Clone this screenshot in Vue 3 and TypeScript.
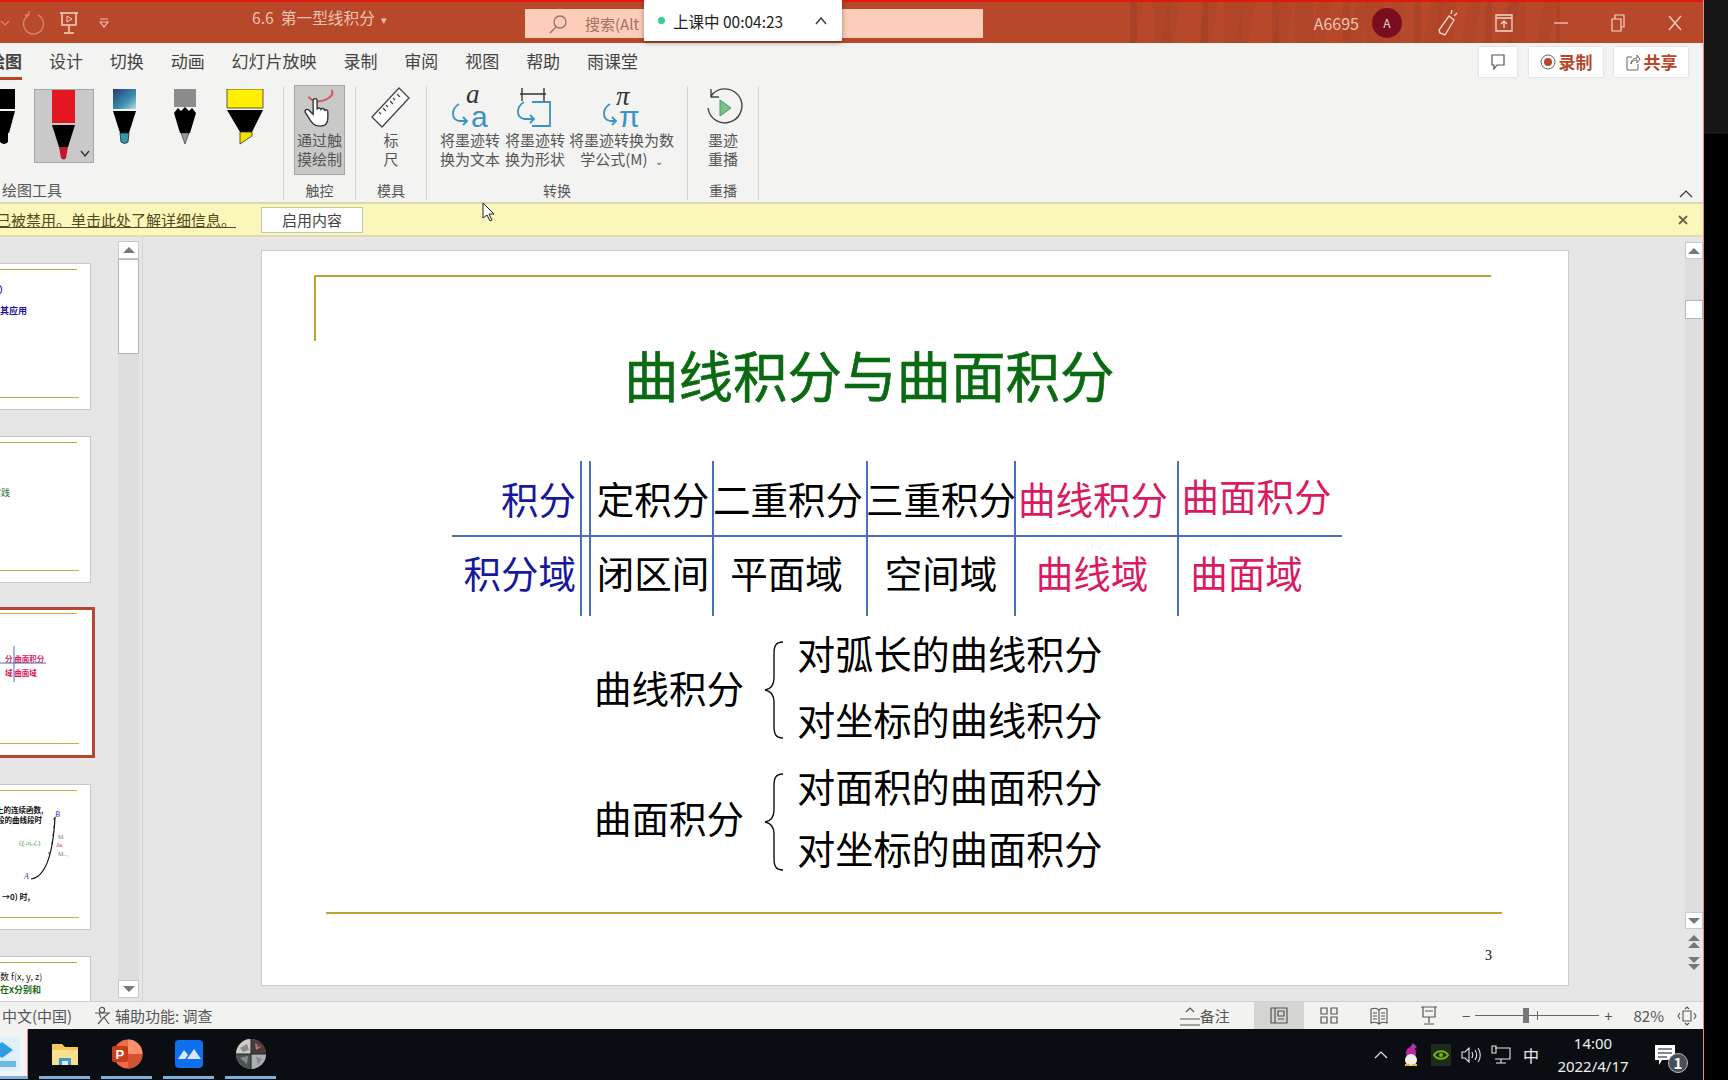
<script setup lang="ts">
interface ThumbRow {
  text: string
  color: string
  top: number
  left: number
  bold?: boolean
  size?: number
}

interface Thumb {
  selected?: boolean
  rows: ThumbRow[]
  curve?: boolean
  height: number
}

const tabs = ['设计', '切换', '动画', '幻灯片放映', '录制', '审阅', '视图', '帮助', '雨课堂']

const thumbs: Thumb[] = [
  {
    height: 147,
    rows: [
      { text: '分）', color: '#1a1a9c', top: 14, left: -10, bold: true },
      { text: '其应用', color: '#1a1a9c', top: 10, left: 0, bold: true },
    ],
  },
  {
    height: 147,
    rows: [{ text: '实践', color: '#1b6b1b', top: 44, left: -8 }],
  },
  {
    height: 151,
    selected: true,
    rows: [
      { text: '分 曲面积分', color: '#d81b60', top: 39, left: 5, bold: true, size: 7.5 },
      { text: '域 曲面域', color: '#d81b60', top: 3, left: 5, bold: true, size: 7.5 },
    ],
  },
  {
    height: 146,
    curve: true,
    rows: [
      { text: '上的连续函数,', color: '#111', top: 13, left: -4, bold: true, size: 7.5 },
      { text: '段的曲线段时', color: '#111', top: -1, left: -3, bold: true, size: 7.5 },
      { text: '→0) 时,', color: '#111', top: 66, left: 2, bold: true, size: 8 },
    ],
  },
  {
    height: 60,
    rows: [
      { text: '数 f(x, y, z)', color: '#222', top: 8, left: 0 },
      { text: '在x分别和', color: '#1b6b1b', top: 2, left: 0, bold: true },
    ],
  },
]

const headRow = [
  { text: '积分', tone: 'blue first' },
  { text: '定积分', tone: 'push' },
  { text: '二重积分', tone: 'pull-s' },
  { text: '三重积分', tone: '' },
  { text: '曲线积分', tone: 'pink pull-m' },
  { text: '曲面积分', tone: 'pink raised' },
]

const bodyRow = [
  { text: '积分域', tone: 'blue first' },
  { text: '闭区间', tone: 'push' },
  { text: '平面域', tone: 'pull-m' },
  { text: '空间域', tone: '' },
  { text: '曲线域', tone: 'pink pull-l' },
  { text: '曲面域', tone: 'pink last' },
]

const taskItems = ['app', 'folder', 'ppt', 'meet', 'photo']
</script>

<template>
  <div class="screen">
    <div class="app">
      <header class="titlebar">
        <div class="quick">
          <svg class="q-undo" width="10" height="8" viewBox="0 0 10 8"><path d="M1 2l4 4 4-4" fill="none" stroke="#d98b72" stroke-width="1.2" /></svg>
          <svg class="q-redo" width="24" height="26" viewBox="0 0 24 26"><path d="M8 5a10 10 0 1 0 9 0M8 5V1M8 5H4" fill="none" stroke="#d9826a" stroke-width="1.4" /></svg>
          <svg class="q-show" width="20" height="24" viewBox="0 0 20 24"><path d="M1 2h18M3 2v12h14V2M10 14v7M5 22h10" fill="none" stroke="#f3d3c6" stroke-width="1.5" /><path d="M8 5l5 3-5 3z" fill="none" stroke="#f3d3c6" /></svg>
          <svg class="q-more" width="10" height="12" viewBox="0 0 10 12"><path d="M1 2h8M1 5l4 5 4-5z" fill="none" stroke="#f0c4b2" stroke-width="1.1" /></svg>
        </div>
        <div class="doc-title">6.6&nbsp; 第一型线积分 <span class="caret">▾</span></div>
        <div class="search">
          <svg width="20" height="20" viewBox="0 0 20 20"><circle cx="12" cy="8" r="6" fill="none" stroke="#a96b58" stroke-width="1.3" /><path d="M8 13l-6 6" stroke="#a96b58" stroke-width="1.3" /></svg>
          <span>搜索(Alt</span>
        </div>
        <div class="title-right">
          <span class="user">A6695</span>
          <span class="avatar">A</span>
          <span class="win-btn"><svg width="22" height="30" viewBox="0 0 22 30"><path d="M13 8l5 4-9 15-5-2-1-3zM16 2l-1 4M21 5l-3 3" fill="none" stroke="#f3d8cc" stroke-width="1.4" /></svg></span>
          <span class="win-btn"><svg width="18" height="18" viewBox="0 0 18 18"><path d="M1 1h16v16H1zM1 4h16M9 14V7M6 10l3-3 3 3" fill="none" stroke="#f3d8cc" stroke-width="1.3" /></svg></span>
          <span class="win-btn"><svg width="14" height="2" viewBox="0 0 14 2"><path d="M0 1h14" stroke="#f3d8cc" stroke-width="1.2" /></svg></span>
          <span class="win-btn"><svg width="14" height="18" viewBox="0 0 14 18"><path d="M1 5h9v12H1zM4 5V1h9v12h-3" fill="none" stroke="#f3d8cc" stroke-width="1.2" /></svg></span>
          <span class="win-btn"><svg width="14" height="16" viewBox="0 0 14 16"><path d="M1 1l12 14M13 1L1 15" stroke="#f3d8cc" stroke-width="1.2" /></svg></span>
        </div>
        <div class="class-pop">
          <i class="live-dot"></i>
          <span>上课中 00:04:23</span>
          <svg width="12" height="8" viewBox="0 0 12 8"><path d="M1 7l5-6 5 6" fill="none" stroke="#444" stroke-width="1.6" /></svg>
        </div>
      </header>

      <nav class="tabs">
        <span class="tab active">绘图</span>
        <span v-for="t in tabs" :key="t" class="tab">{{ t }}</span>
        <div class="tab-actions">
          <span class="act small">
            <svg width="16" height="18" viewBox="0 0 16 18"><path d="M2 2h12v10H7l-3 4v-4H2z" fill="none" stroke="#555" stroke-width="1.2" /></svg>
          </span>
          <span class="act rec">
            <svg width="16" height="16" viewBox="0 0 16 16"><circle cx="8" cy="8" r="7" fill="none" stroke="#666" /><circle cx="8" cy="8" r="4" fill="#b7472a" /></svg>
            录制
          </span>
          <span class="act rec">
            <svg width="16" height="18" viewBox="0 0 16 18"><path d="M7 4H2v13h11v-6M6 11c0-4 3-6 6-6V2l3 4-3 4V7c-3 0-5 1-6 4z" fill="none" stroke="#666" /></svg>
            共享
          </span>
        </div>
      </nav>

      <section class="ribbon">
        <div class="group pens">
          <div class="group-body pen-row">
            <svg class="pen" viewBox="0 0 60 74">
              <path d="M19 0h22v20H19z" fill="#000" />
              <path d="M19 22h22l-6 22H25z" fill="#000" />
              <path d="M26 44h8v9q-4 4-8 0z" fill="#000" />
            </svg>
            <div class="pen-selected">
              <svg class="pen" viewBox="0 0 60 74">
                <path d="M18 0h23v34H18z" fill="#e31621" />
                <path d="M18 36h23l-7 22h-9z" fill="#000" />
                <path d="M25 58h9l-2 11q-2 3-5 0z" fill="#c3172a" />
                <path d="M47 62l4 5 4-5" fill="none" stroke="#333" stroke-width="1.4" />
              </svg>
            </div>
            <svg class="pen" viewBox="0 0 60 74">
              <defs><linearGradient id="gal" x1="0" y1="0" x2="1" y2="1"><stop offset="0" stop-color="#263a78" /><stop offset=".6" stop-color="#3a8fb0" /><stop offset="1" stop-color="#b8dbe0" /></linearGradient></defs>
              <path d="M19 0h23v20H19z" fill="url(#gal)" />
              <path d="M19 22h23l-7 22h-9z" fill="#000" />
              <path d="M26 44h9l-1 9q-3 3-7 0z" fill="#2f9aa8" stroke="#123" stroke-width=".8" />
            </svg>
            <svg class="pen" viewBox="0 0 60 74">
              <path d="M20 0h22v18H20z" fill="#8c8c8c" />
              <path d="M20 24l4-5 3 3 4-4 4 4 3-3 4 5-6 20h-10z" fill="#000" />
              <path d="M27 44h8l-4 11z" fill="#999" stroke="#222" stroke-width=".6" />
            </svg>
            <svg class="pen" viewBox="0 0 60 74">
              <path d="M13 0h36v19H13z" fill="#ffef00" stroke="#333" stroke-width=".8" />
              <path d="M13 21h36l-11 22H26z" fill="#000" />
              <path d="M26 43h12v4l-12 8z" fill="#f3e000" stroke="#333" stroke-width=".8" />
            </svg>
          </div>
          <div class="group-label left">绘图工具</div>
        </div>

        <div class="group touch">
          <div class="group-body">
            <div class="big-btn on">
              <svg width="40" height="46" viewBox="0 0 40 46">
                <path d="M8 12c4 5 12 6 18 3s8-6 6-10" fill="none" stroke="#d9575e" stroke-width="2" />
                <path d="M13 15c2-2 4-1 4 1v9c1-2 3-2 4 0 1-2 3-1 4 1 1-1 3-1 3 1v7c0 6-3 8-8 8-6 0-8-3-10-6l-5-8c-1-3 2-4 4-2l4 4z" fill="#fff" stroke="#333" stroke-width="1.4" />
              </svg>
              <span>通过触<br />摸绘制</span>
            </div>
          </div>
          <div class="group-label">触控</div>
        </div>

        <div class="group ruler">
          <div class="group-body">
            <div class="big-btn">
              <svg width="40" height="44" viewBox="0 0 40 44">
                <path d="M28 2l10 10L11 41 1 31z" fill="#fff" stroke="#444" stroke-width="1.3" />
                <path d="M26 8l3 3M22 12l2 2M19 15l3 3M15 19l2 2M12 22l3 3M8 26l2 2" stroke="#444" stroke-width="1.2" />
              </svg>
              <span>标<br />尺</span>
            </div>
          </div>
          <div class="group-label">模具</div>
        </div>

        <div class="group convert">
          <div class="group-body conv-row">
            <div class="big-btn conv w1">
              <svg width="42" height="44" viewBox="0 0 42 44">
                <text x="17" y="17" class="ico-serif" font-size="27" fill="#333">a</text>
                <path d="M10 18c-8 5-8 15 0 17h8M14 31l4 4-4 4" fill="none" stroke="#3b93c4" stroke-width="1.8" />
                <text x="22" y="41" class="ico-sans" font-size="30" fill="#3b93c4">a</text>
              </svg>
              <span>将墨迹转<br />换为文本</span>
            </div>
            <div class="big-btn conv w2">
              <svg width="42" height="44" viewBox="0 0 42 44">
                <path d="M6 8h26M8 2v13M30 2v13" fill="none" stroke="#333" stroke-width="1.4" />
                <path d="M18 16h18v24H18" fill="none" stroke="#3b93c4" stroke-width="1.8" />
                <path d="M10 16c-8 5-8 15 0 17h10M16 29l4 4-4 4" fill="none" stroke="#3b93c4" stroke-width="1.8" />
              </svg>
              <span>将墨迹转<br />换为形状</span>
            </div>
            <div class="big-btn conv w3">
              <svg width="42" height="44" viewBox="0 0 42 44">
                <text x="15" y="19" class="ico-serif" font-size="27" fill="#333">π</text>
                <path d="M9 18c-8 5-8 15 0 17h6M11 31l4 4-4 4" fill="none" stroke="#3b93c4" stroke-width="1.8" />
                <text x="18" y="41" class="ico-sans" font-size="30" fill="#3b93c4">π</text>
              </svg>
              <span>将墨迹转换为数<br />学公式(M) <small>⌄</small></span>
            </div>
          </div>
          <div class="group-label">转换</div>
        </div>

        <div class="group replay">
          <div class="group-body">
            <div class="big-btn">
              <svg width="40" height="44" viewBox="0 0 40 44">
                <path d="M8 10a17 17 0 1 1-3 12M8 3v8h8" fill="none" stroke="#444" stroke-width="1.4" />
                <path d="M17 14l11 8-11 8z" fill="#7cc08a" stroke="#3f9c64" />
              </svg>
              <span>墨迹<br />重播</span>
            </div>
          </div>
          <div class="group-label">重播</div>
        </div>

        <svg class="collapse" width="14" height="9" viewBox="0 0 14 9"><path d="M1 8l6-6 6 6" fill="none" stroke="#333" stroke-width="1.2" /></svg>
      </section>

      <div class="msgbar">
        <div class="msg-clip"><span>已被禁用。单击此处了解详细信息。</span></div>
        <button class="enable">启用内容</button>
        <svg class="msg-close" width="10" height="10" viewBox="0 0 10 10"><path d="M1 1l8 8M9 1l-8 8" stroke="#6b6640" stroke-width="1.8" /></svg>
        <svg class="cursor" width="14" height="20" viewBox="0 0 14 20"><path d="M1 1v15l4-3 3 6 2-1-3-6h5z" fill="#fff" stroke="#222" /></svg>
      </div>

      <main class="workspace">
        <aside class="thumb-pane">
          <div class="thumb-list">
            <div
              v-for="(t, i) in thumbs"
              :key="i"
              class="thumb"
              :class="{ selected: t.selected }"
              :style="{ height: t.height + 'px' }"
            >
              <i class="thumb-line"></i>
              <p
                v-for="r in t.rows"
                :key="r.text"
                class="thumb-text"
                :class="{ bold: r.bold }"
                :style="{ color: r.color, marginTop: r.top + 'px', marginLeft: r.left + 'px', fontSize: (r.size ?? 9) + 'px' }"
              >{{ r.text }}</p>
              <svg v-if="t.selected" class="thumb-grid" width="95" height="40" viewBox="0 0 95 40">
                <path d="M0 17h46M14 0v36" fill="none" stroke="#4a6fbd" stroke-width="1" />
              </svg>
              <svg v-if="t.curve" class="thumb-curve" width="50" height="72" viewBox="0 0 50 72">
                <path d="M6 68c14-2 22-24 24-62" fill="none" stroke="#111" stroke-width="1.2" />
                <path d="M30 8h-2M30 16h-2M29 24h-2M28 32h-2M25 42h-2" stroke="#111" stroke-width=".8" />
                <text x="30" y="6" font-size="8" fill="#3a2fb0" font-style="italic">B</text>
                <text x="-1" y="68" font-size="8" fill="#3a2fb0" font-style="italic">A</text>
                <text x="31" y="36" font-size="6" fill="#c2185b">Δsᵢ</text>
                <text x="33" y="28" font-size="6" fill="#777">Mᵢ</text>
                <text x="33" y="45" font-size="6" fill="#777">Mᵢ₋₁</text>
                <text x="-6" y="34" font-size="7" fill="#2e9a3e">(ξᵢ,ηᵢ,ζᵢ)</text>
              </svg>
              <i class="thumb-line bottom"></i>
            </div>
          </div>
          <div class="scroll left-scroll">
            <span class="sb-btn"><i class="arr up"></i></span>
            <span class="sb-thumb"></span>
            <span class="sb-track"></span>
            <span class="sb-btn"><i class="arr down"></i></span>
          </div>
        </aside>

        <div class="stage">
          <article class="slide">
            <div class="corner"></div>
            <h1 class="slide-title">曲线积分与曲面积分</h1>
            <div class="int-table">
              <div v-for="c in headRow" :key="c.text" class="cell head" :class="c.tone"><span>{{ c.text }}</span></div>
              <div v-for="c in bodyRow" :key="c.text" class="cell low" :class="c.tone"><span>{{ c.text }}</span></div>
            </div>
            <div class="branch">
              <span class="branch-name">曲线积分</span>
              <svg class="brace" width="22" height="98" viewBox="0 0 22 98"><path d="M20 1c-8 0-9 5-9 12v24c0 7-3 11-9 12 6 1 9 5 9 12v24c0 7 1 12 9 12" fill="none" stroke="#111" stroke-width="1.4" /></svg>
              <div class="branch-list one"><span>对弧长的曲线积分</span><span>对坐标的曲线积分</span></div>
            </div>
            <div class="branch second">
              <span class="branch-name">曲面积分</span>
              <svg class="brace" width="22" height="98" viewBox="0 0 22 98"><path d="M20 1c-8 0-9 5-9 12v24c0 7-3 11-9 12 6 1 9 5 9 12v24c0 7 1 12 9 12" fill="none" stroke="#111" stroke-width="1.4" /></svg>
              <div class="branch-list two"><span>对面积的曲面积分</span><span>对坐标的曲面积分</span></div>
            </div>
            <div class="foot-rule"></div>
            <div class="page-no">3</div>
          </article>
          <div class="scroll main-scroll">
            <span class="sb-btn"><i class="arr up"></i></span>
            <span class="sb-gap"></span>
            <span class="sb-thumb small"></span>
            <span class="sb-track"></span>
            <span class="sb-btn"><i class="arr down"></i></span>
            <span class="page-jump first"><i class="arr up"></i><i class="arr up tight"></i></span>
            <span class="page-jump"><i class="arr down"></i><i class="arr down tight"></i></span>
          </div>
        </div>
      </main>

      <footer class="statusbar">
        <span class="lang">中文(中国)</span>
        <span class="a11y">
          <svg width="18" height="20" viewBox="0 0 18 20"><circle cx="8" cy="4" r="2.6" fill="none" stroke="#555" stroke-width="1.2" /><path d="M1 7h14l-5 4 5 7M10 11l-6 7M5 7l2 5" fill="none" stroke="#555" stroke-width="1.2" /></svg>
          辅助功能: 调查
        </span>
        <div class="status-right">
          <span class="notes">
            <svg width="20" height="20" viewBox="0 0 20 20"><path d="M0 13h20M0 19h20M6 6l4-4 4 4" fill="none" stroke="#555" stroke-width="1.2" /></svg>
            备注
          </span>
          <span class="view-btn on"><svg width="18" height="17" viewBox="0 0 18 17"><path d="M1 1h16v15H1zM5 1v15M8 4h6v5H8zM8 12h6" fill="none" stroke="#555" stroke-width="1.2" /></svg></span>
          <span class="view-btn"><svg width="18" height="17" viewBox="0 0 18 17"><path d="M1 1h6v6H1zM11 1h6v6h-6zM1 10h6v6H1zM11 10h6v6h-6z" fill="none" stroke="#555" stroke-width="1.2" /></svg></span>
          <span class="view-btn"><svg width="18" height="18" viewBox="0 0 18 18"><path d="M9 3C7 1 4 1 1 2v14c3-1 6-1 8 1 2-2 5-2 8-1V2c-3-1-6-1-8 1zM9 3v14M3 6h4M3 9h4M3 12h4M11 6h4M11 9h4M11 12h4" fill="none" stroke="#555" stroke-width="1.1" /></svg></span>
          <span class="view-btn"><svg width="18" height="19" viewBox="0 0 18 19"><path d="M1 1h16M3 1v10h12V1M9 11v6M4 18h10M5 5h8" fill="none" stroke="#555" stroke-width="1.2" /></svg></span>
          <span class="zoom-sign first">−</span>
          <div class="slider"><i class="slider-mid"></i><i class="slider-knob"></i></div>
          <span class="zoom-sign">+</span>
          <span class="zoom-val">82%</span>
          <svg class="fit" width="20" height="20" viewBox="0 0 20 20"><path d="M6 5h8v10H6zM3 7l-2 3 2 3M17 7l2 3-2 3M8 3l2-2 2 2M8 17l2 2 2-2" fill="none" stroke="#555" stroke-width="1.1" /></svg>
        </div>
      </footer>

      <div class="taskbar">
        <div class="task-apps">
          <div v-for="k in taskItems" :key="k" class="task-item" :class="k">
            <svg v-if="k === 'app'" width="36" height="34" viewBox="0 0 36 34">
              <rect x="0" y="0" width="36" height="34" rx="5" fill="#dff0fb" />
              <path d="M18 5l11 8-11 8-11-8z" fill="#2f9de0" />
              <rect x="4" y="24" width="28" height="6" fill="#67b9e8" />
            </svg>
            <svg v-else-if="k === 'folder'" width="28" height="24" viewBox="0 0 28 24">
              <path d="M1 2h10l3 3h13v18H1z" fill="#f3c95a" />
              <path d="M1 8h26v15H1z" fill="#fadf8c" />
              <path d="M8 16h12v7H8z" fill="#3d9ad1" />
              <path d="M11 19h6v4h-6z" fill="#dff0fb" />
            </svg>
            <svg v-else-if="k === 'ppt'" width="32" height="30" viewBox="0 0 32 30">
              <circle cx="17" cy="15" r="14.5" fill="#ed6c47" />
              <path d="M17 15V.5a14.5 14.5 0 0 1 14.5 14.5z" fill="#ff8f6b" />
              <path d="M17 15h14.5A14.500 14.500 0 0 1 17 29.500z" fill="#d35230" />
              <rect x="1" y="7" width="16" height="16" rx="2" fill="#c43e1c" />
              <text x="4.500" y="20" font-size="13" font-weight="700" fill="#fff" class="ico-sans">P</text>
            </svg>
            <svg v-else-if="k === 'meet'" width="28" height="28" viewBox="0 0 28 28">
              <rect width="28" height="28" rx="4" fill="#0f6fec" />
              <path d="M3 19l6-9 4 5-3 4zM12 19l7-10 7 10z" fill="#d8e8fb" />
            </svg>
            <svg v-else width="30" height="30" viewBox="0 0 30 30">
              <circle cx="15" cy="15" r="15" fill="#8d8d8d" />
              <path d="M15 0a15 15 0 0 0-15 15h15z" fill="#cfccc6" />
              <path d="M15 0a15 15 0 0 1 15 15H15z" fill="#4a3a3a" />
              <path d="M15 15H0a15 15 0 0 0 15 15z" fill="#4c5356" />
              <path d="M15 15h15a15 15 0 0 1-15 15z" fill="#a9b0b4" />
              <path d="M4 9l7-4 2 6-6 2zM19 4l6 4-5 3zM4 19l8-2-1 8zM20 18l6 2-4 6z" fill="#8a8a8a" />
              <path d="M21 6h4v2h-4z" fill="#b52d2d" />
              <path d="M14.500 0h1v30h-1zM0 14.500h30v1H0z" fill="#222" />
            </svg>
          </div>
        </div>
        <div class="tray">
          <span class="tray-slot"><svg width="14" height="9" viewBox="0 0 14 9"><path d="M1 8l6-6 6 6" fill="none" stroke="#e6e6e6" stroke-width="1.2" /></svg></span>
          <span class="tray-slot"><svg width="16" height="24" viewBox="0 0 16 24"><path d="M10 0l4 4-4 3-3-3z" fill="#a33aa8" /><ellipse cx="8" cy="10" rx="5" ry="6" fill="#c026a8" /><ellipse cx="8" cy="17" rx="6" ry="6" fill="#f1eee6" /><path d="M2 22h5M9 22h5" stroke="#f2b632" stroke-width="2" /></svg></span>
          <span class="tray-slot"><svg width="20" height="22" viewBox="0 0 20 22"><rect width="20" height="22" fill="#1e2b1c" /><path d="M3 11c3-5 11-5 14 0-3 5-11 5-14 0z" fill="none" stroke="#76b900" stroke-width="2" /><circle cx="10" cy="11" r="2" fill="#76b900" /></svg></span>
          <span class="tray-slot"><svg width="20" height="20" viewBox="0 0 20 20"><path d="M1 7h3l4-4v14l-4-4H1zM11 7c1 2 1 4 0 6M14 5c2 3 2 7 0 10M17 3c3 4 3 10 0 14" fill="none" stroke="#e6e6e6" stroke-width="1.1" /></svg></span>
          <span class="tray-slot"><svg width="20" height="20" viewBox="0 0 20 20"><path d="M4 3h15v11H4M10 14v4M5 18h10M1 1h4v7H1z" fill="none" stroke="#e6e6e6" stroke-width="1.1" /></svg></span>
          <span class="tray-slot ime">中</span>
          <div class="clock"><span>14:00</span><span>2022/4/17</span></div>
          <div class="notify">
            <svg width="22" height="22" viewBox="0 0 22 22"><path d="M1 1h20v15H8l-3 5v-5H1z" fill="#fff" /><path d="M4 5h14M4 9h14M4 13h9" stroke="#111" stroke-width="1.2" /></svg>
            <b class="badge">1</b>
          </div>
        </div>
      </div>
    </div>
    <div class="edge"></div>
  </div>
</template>

<style scoped>
.screen {
  width: 1728px;
  height: 1080px;
  display: flex;
  overflow: hidden;
  background: #000;
  font-family: "Noto Sans CJK SC", "Noto Sans", sans-serif;
  color: #444;
}

.app {
  position: relative;
  width: 1704px;
  height: 1080px;
  flex: none;
  display: flex;
  flex-direction: column;
  overflow: hidden;
  box-sizing: border-box;
  border-right: 1px solid #e88;
  background: #f3f3f1;
}

.edge {
  flex: 1;
  height: 134px;
  background: #161616;
}

/* title bar */
.titlebar {
  position: relative;
  height: 43px;
  flex: none;
  display: flex;
  align-items: center;
  box-sizing: border-box;
  border-top: 2px solid #e2170c;
  background-color: #b7482a;
  background-image:
    repeating-linear-gradient(90deg, rgba(70, 30, 15, 0.1) 0 7px, transparent 7px 23px, rgba(70, 30, 15, 0.06) 23px 41px, transparent 41px 71px),
    repeating-linear-gradient(100deg, rgba(70, 30, 15, 0.05) 0 13px, transparent 13px 37px);
  background-size: 430px 100%;
  background-position: 1130px 0;
  background-repeat: no-repeat;
}

.quick {
  width: 252px;
  flex: none;
  display: flex;
  align-items: center;
}

.q-undo { margin-left: 0; }
.q-redo { margin-left: 11px; }
.q-show { margin-left: 14px; }
.q-more { margin-left: 20px; }

.doc-title {
  width: 273px;
  flex: none;
  font-size: 15.7px;
  color: #efc4b2;
  margin-top: -10px;
  white-space: nowrap;
}

.caret { font-size: 11px; margin-left: 3px; }

.search {
  width: 458px;
  height: 29px;
  flex: none;
  display: flex;
  align-items: center;
  gap: 17px;
  padding-left: 23px;
  box-sizing: border-box;
  background: #fccdb9;
  font-size: 15px;
  color: #a5705c;
  margin-top: 2px;
}

.title-right {
  margin-left: auto;
  display: flex;
  align-items: center;
}

.user {
  font-size: 16px;
  color: #efc4b2;
}

.avatar {
  width: 30px;
  height: 30px;
  border-radius: 50%;
  margin: 0 16px 0 13px;
  display: flex;
  align-items: center;
  justify-content: center;
  background: #7a0e20;
  color: #f3d8cc;
  font-size: 12px;
}

.win-btn {
  width: 57px;
  display: flex;
  justify-content: center;
  align-items: center;
}

.class-pop {
  position: absolute;
  left: 644px;
  top: -2px;
  width: 198px;
  height: 41px;
  box-sizing: border-box;
  display: flex;
  align-items: center;
  padding: 0 15px 0 14px;
  background: #fff;
  box-shadow: 0 2px 5px rgba(0, 0, 0, 0.35);
  font-size: 15.5px;
  color: #222;
}

.class-pop svg { margin-left: auto; }

.live-dot {
  width: 7px;
  height: 7px;
  border-radius: 50%;
  background: #2fd28e;
  margin-right: 8px;
}

/* tabs */
.tabs {
  height: 37px;
  flex: none;
  display: flex;
  align-items: center;
  gap: 26.9px;
  margin-left: -12px;
}

.tab {
  position: relative;
  height: 37px;
  line-height: 36px;
  font-size: 17px;
  color: #444;
  white-space: nowrap;
}

.tab.active {
  font-weight: 700;
  border-bottom: 3px solid #b7472a;
  box-sizing: border-box;
}

.tab-actions {
  margin-left: auto;
  display: flex;
  gap: 11px;
  padding-right: 15px;
}

.act {
  height: 30px;
  display: flex;
  align-items: center;
  justify-content: center;
  gap: 3px;
  background: #fff;
  box-shadow: 0 0 2px rgba(0, 0, 0, 0.18);
  font-size: 17px;
  font-weight: 700;
  color: #b7472a;
}

.act.small { width: 38px; margin-right: 1px; }
.act.rec { width: 74px; }

/* ribbon */
.ribbon {
  height: 122px;
  flex: none;
  display: flex;
  font-size: 15px;
  color: #555;
}

.group {
  display: flex;
  flex-direction: column;
  box-sizing: border-box;
  border-right: 1px solid #d5d5d3;
  margin-bottom: 2px;
  margin-top: 6px;
}

.group-body {
  flex: 1;
  display: flex;
  justify-content: center;
  min-height: 0;
}

.group-label {
  height: 20px;
  text-align: center;
  font-size: 14px;
  line-height: 20px;
  color: #555;
}

.group-label.left { text-align: left; padding-left: 2px; font-size: 15px; }

.pens { width: 284px; }
.touch { width: 72px; }
.ruler { width: 71px; }
.convert { width: 261px; }
.replay { width: 71px; }

.pen-row {
  justify-content: flex-start;
  padding-top: 3px;
  margin-left: -26px;
}

.pen {
  width: 60px;
  height: 74px;
  flex: none;
}

.pen-selected {
  width: 60px;
  height: 74px;
  flex: none;
  box-sizing: border-box;
  background: #c9c9c9;
  outline: 1px solid #a5a5a5;
  outline-offset: -1px;
}

.big-btn {
  display: flex;
  flex-direction: column;
  align-items: center;
  text-align: center;
  line-height: 19px;
  font-size: 15px;
  height: 90px;
  box-sizing: border-box;
  white-space: nowrap;
}

.big-btn svg { height: 44px; flex: none; }

.big-btn.on {
  width: 51px;
  margin-top: -1px;
  background: #c9c9c7;
  outline: 1px solid #a5a5a5;
  outline-offset: -1px;
}

.big-btn.on svg { height: 45px; }

.big-btn small { font-size: 10px; margin-left: 4px; }

.conv-row { justify-content: flex-start; padding-left: 13px; }
.conv.w1 { width: 60px; }
.conv.w2 { width: 62px; margin-left: 4px; }
.conv.w3 { width: 105px; margin-left: 3px; }

.ico-serif { font-family: "Liberation Serif", serif; font-style: italic; }
.ico-sans { font-family: "Liberation Sans", sans-serif; }

.collapse {
  margin-left: auto;
  margin-right: 10px;
  align-self: flex-end;
  margin-bottom: 4px;
}

/* message bar */
.msgbar {
  position: relative;
  height: 35px;
  flex: none;
  display: flex;
  align-items: center;
  box-sizing: border-box;
  background: #fbf6b9;
  border-top: 2px solid #dcd9ae;
  border-bottom: 2px solid #dfdcb4;
  font-size: 15px;
  color: #4f4c20;
}

.msg-clip {
  width: 236px;
  flex: none;
  overflow: hidden;
  display: flex;
  justify-content: flex-end;
  white-space: nowrap;
  text-decoration: underline;
}

.enable {
  width: 102px;
  height: 26px;
  margin-left: 25px;
  border: 1px solid #c6c6b0;
  background: #fff;
  font: inherit;
  color: #444;
  padding: 0;
}

.msg-close { margin-left: auto; margin-right: 15px; }

.cursor {
  position: absolute;
  left: 482px;
  top: -2px;
}

/* workspace */
.workspace {
  height: 765px;
  flex: none;
  display: flex;
  background: #e6e6e6;
  border-bottom: 1px solid #cfcfcd;
  box-sizing: border-box;
}

.thumb-pane {
  width: 143px;
  flex: none;
  display: flex;
  box-sizing: border-box;
  border-right: 1px solid #d2d2d2;
  overflow: hidden;
}

.thumb-list {
  width: 118px;
  flex: none;
  padding-top: 26px;
  display: flex;
  flex-direction: column;
  gap: 26px;
  overflow: hidden;
}

.thumb {
  position: relative;
  width: 91px;
  flex: none;
  box-sizing: border-box;
  padding-top: 5px;
  background: #fff;
  border: 1px solid #c8c8c8;
  border-left: 0;
  display: flex;
  flex-direction: column;
}

.thumb.selected {
  width: 95px;
  margin-top: -2px;
  border: 3px solid #b5482f;
  border-left: 0;
  padding-top: 3px;
}

.thumb-line {
  display: block;
  width: 77px;
  height: 1px;
  flex: none;
  background: #c9ad45;
}

.thumb-line.bottom {
  width: 79px;
  margin-top: auto;
  margin-bottom: 11px;
}

.thumb-text {
  margin: 0;
  font-size: 9px;
  line-height: 11px;
  white-space: nowrap;
}

.thumb-text.bold { font-weight: 700; }

.thumb-curve {
  position: absolute;
  left: 25px;
  top: 26px;
  overflow: visible;
  font-family: "Liberation Serif", serif;
}

.thumb-grid {
  position: absolute;
  left: 0;
  top: 36px;
}

.scroll {
  width: 21px;
  flex: none;
  display: flex;
  flex-direction: column;
  background: #dcdfdc;
  box-sizing: border-box;
}

.left-scroll {
  margin: 4px 0 3px;
}

.sb-btn {
  height: 18px;
  flex: none;
  display: flex;
  align-items: center;
  justify-content: center;
  background: #fff;
  border: 1px solid #c8c8c8;
  box-sizing: border-box;
}

.sb-thumb {
  height: 95px;
  flex: none;
  background: #fff;
  border: 1px solid #b5b5b5;
  box-sizing: border-box;
}

.sb-thumb.small { height: 19px; }
.sb-track { flex: 1; }
.sb-gap { height: 41px; flex: none; }

.arr {
  display: block;
  width: 0;
  height: 0;
  border-left: 6px solid transparent;
  border-right: 6px solid transparent;
}

.arr.up { border-bottom: 6px solid #777; }
.arr.down { border-top: 6px solid #777; }
.arr.tight { margin-top: 1px; }

.stage {
  flex: 1;
  display: flex;
  justify-content: space-between;
  padding-left: 118px;
  min-width: 0;
}

.slide {
  width: 1308px;
  height: 736px;
  margin-top: 13px;
  flex: none;
  box-sizing: border-box;
  background: #fff;
  border: 1px solid #cbcbcb;
  color: #000;
}

.corner {
  width: 1177px;
  height: 66px;
  box-sizing: border-box;
  margin: 24px 0 0 52px;
  border-top: 2px solid #bda235;
  border-left: 2px solid #bda235;
}

.slide-title {
  margin: 1px 0 0 362px;
  font-size: 54.5px;
  line-height: 64px;
  font-weight: 400;
  color: #0a6a12;
  -webkit-text-stroke: 0.6px #0a6a12;
  white-space: nowrap;
}

.int-table {
  margin: 55px 0 0 190px;
  width: 890px;
  display: grid;
  grid-template-columns: 139px 123px 154px 148px 163px 163px;
  grid-template-rows: 76px 79px;
}

.cell {
  display: flex;
  align-items: center;
  justify-content: center;
  box-sizing: border-box;
  border-right: 2px solid #4a6fbd;
  font-size: 37.5px;
  line-height: 1;
  white-space: nowrap;
  font-weight: 400;
}

.cell:nth-child(6n) { border-right: 0; }
.cell.head { border-bottom: 2px solid #4a6fbd; }
.cell.low span { margin-top: -10px; }

.cell.first {
  justify-content: flex-end;
  padding-right: 13px;
  background: linear-gradient(#4a6fbd, #4a6fbd) right 7px top 0 / 2px 100% no-repeat;
}

.cell.blue { color: #17189b; }
.cell.pink { color: #d81b63; }
.cell.push span { margin-left: 3px; }
.cell.pull-s span { margin-right: 4px; }
.cell.pull-m span { margin-right: 7px; }
.cell.pull-l span { margin-right: 9px; }
.cell.raised span { margin-top: -6px; margin-right: 8px; }
.cell.last span { margin-right: 28px; }

.branch {
  margin: 25px 0 0 332px;
  display: flex;
  align-items: center;
  font-size: 37.5px;
  font-weight: 400;
  line-height: 1;
  white-space: nowrap;
}

.branch.second { margin-top: 34px; }

.branch-name { width: 169px; flex: none; margin-top: -6px; }
.second .branch-name { margin-top: -11px; }
.brace { flex: none; }

.branch-list {
  height: 98px;
  margin: -4px 0 0 12px;
  display: flex;
  flex-direction: column;
  box-sizing: border-box;
  font-size: 38.2px;
}

.branch-list span { height: 28px; line-height: 28px; }
.branch-list.one { gap: 38px; }
.branch-list.two { gap: 34px; padding-top: 1px; }

.foot-rule {
  width: 1176px;
  height: 2px;
  margin: 41px 0 0 64px;
  background: #bda235;
}

.page-no {
  margin: 33px 0 0 1223px;
  font-family: "Liberation Serif", serif;
  font-size: 14px;
  line-height: 18px;
}

.main-scroll {
  width: 18px;
  margin: 5px 0 0;
  height: 732px;
}

.main-scroll .sb-btn { height: 17px; }

.page-jump {
  height: 21px;
  flex: none;
  display: flex;
  flex-direction: column;
  align-items: center;
  justify-content: center;
  background: #e6e6e6;
}

.page-jump.first { height: 24px; }

/* status bar */
.statusbar {
  height: 27px;
  flex: none;
  display: flex;
  align-items: center;
  font-size: 15px;
  color: #555;
  background: #f2f2f0;
  padding-left: 2px;
}

.lang { width: 92px; flex: none; }

.a11y {
  display: flex;
  align-items: center;
  gap: 3px;
}

.status-right {
  margin-left: auto;
  display: flex;
  align-items: center;
  height: 27px;
}

.notes {
  display: flex;
  align-items: center;
  font-size: 15px;
  margin-right: 24px;
}

.view-btn {
  width: 50px;
  height: 27px;
  display: flex;
  align-items: center;
  justify-content: center;
}

.view-btn.on { background: #d4d4d2; }

.zoom-sign { font-size: 15px; line-height: 1; margin: 0 5px; }
.zoom-sign.first { margin-left: 8px; }

.slider {
  position: relative;
  width: 124px;
  height: 1px;
  background: #666;
}

.slider-mid {
  position: absolute;
  left: 62px;
  top: -4px;
  width: 1px;
  height: 9px;
  background: #666;
}

.slider-knob {
  position: absolute;
  left: 48px;
  top: -7px;
  width: 6px;
  height: 15px;
  background: #777;
}

.zoom-val { font-size: 15px; margin-left: 16px; }
.fit { margin: 0 6px 0 13px; }

/* taskbar */
.taskbar {
  flex: 1;
  display: flex;
  background: #0a0e13;
  color: #eee;
}

.task-apps {
  display: flex;
  gap: 11px;
  margin-left: -23px;
}

.task-item {
  width: 51px;
  height: 50px;
  flex: none;
  box-sizing: border-box;
  display: flex;
  align-items: center;
  justify-content: center;
  padding-top: 2px;
  border-bottom: 3px solid #7fb2da;
}

.tray {
  margin-left: auto;
  display: flex;
  align-items: center;
  padding-right: 13px;
}

.tray-slot {
  width: 30px;
  display: flex;
  justify-content: center;
  align-items: center;
}

.ime { font-size: 16px; color: #eee; }

.clock {
  width: 94px;
  display: flex;
  flex-direction: column;
  align-items: center;
  font-size: 15px;
  line-height: 23px;
  color: #f0f0f0;
  font-family: "Noto Sans", sans-serif;
}

.notify {
  position: relative;
  width: 50px;
  display: flex;
  justify-content: center;
  margin-right: 0;
}

.badge {
  position: absolute;
  left: 28px;
  top: 9px;
  width: 20px;
  height: 20px;
  border-radius: 50%;
  background: #4a4f55;
  border: 1px solid #bbb;
  box-sizing: border-box;
  text-align: center;
  line-height: 18px;
  font-size: 15px;
  color: #fff;
}
</style>

<style>
html,
body {
  margin: 0;
  background: #000;
}
</style>
